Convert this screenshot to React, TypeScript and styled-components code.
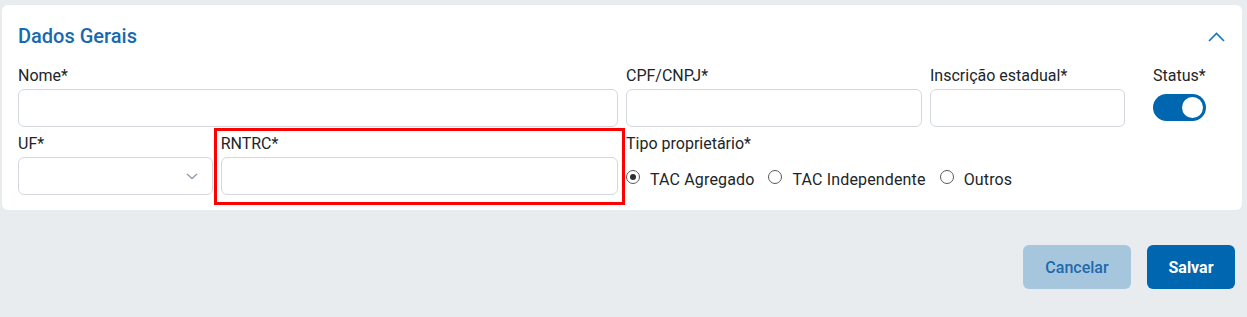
import React from "react"
import styled, { createGlobalStyle } from "styled-components"

const GlobalStyle = createGlobalStyle`
    * { box-sizing: border-box; }
    body {
        margin: 0;
        background: #e9ecee;
        font-family: Roboto, "Liberation Sans", Arial, sans-serif;
        color: #212529;
    }
`

const Page = styled.div`
    padding: 5px 5px 0 2px;
`

const Card = styled.section`
    background: #ffffff;
    border-radius: 6px;
    padding: 21px 16px 15px 16px;
`

const CardHeader = styled.div`
    display: flex;
    align-items: center;
    justify-content: space-between;
    height: 21px;
`

const Title = styled.h2`
    margin: 0;
    font-size: 20px;
    line-height: 21px;
    font-weight: 500;
    color: #1769b0;
`

const CollapseButton = styled.button`
    border: 0;
    background: transparent;
    padding: 0;
    margin-right: 1px;
    display: flex;
    cursor: pointer;
`

const FormGrid = styled.div`
    display: grid;
    grid-template-columns: repeat(12, 1fr);
    column-gap: 8px;
    row-gap: 7px;
    margin-top: 19px;
`

type FieldType = {
    $span: number
    $center?: boolean
    $highlight?: boolean
}

const Field = styled.div<FieldType>`
    grid-column: span ${props => props.$span};
    display: flex;
    flex-direction: column;
    gap: 4px;
    align-items: ${props => props.$center ? 'center' : 'stretch'};
    position: relative;
    ${props => props.$highlight && `
        &::after {
            content: "";
            position: absolute;
            top: -6px;
            left: -7px;
            right: -7px;
            bottom: -10px;
            border: 3px solid #ff0000;
            pointer-events: none;
        }
    `}
`

const Label = styled.label`
    font-size: 16px;
    line-height: 19px;
    font-weight: 400;
    color: #212529;
    white-space: nowrap;
`

const Input = styled.input`
    height: 38px;
    width: 100%;
    border: 1px solid #d4d8dd;
    border-radius: 6px;
    background: #fff;
    font: inherit;
    padding: 0 12px;
    outline: none;
`

const SelectBox = styled.div`
    height: 38px;
    border: 1px solid #d4d8dd;
    border-radius: 6px;
    display: flex;
    align-items: center;
    justify-content: flex-end;
    padding-right: 14px;
`

const Toggle = styled.div<{ $on: boolean }>`
    width: 53px;
    height: 27px;
    margin-top: 5px;
    border-radius: 14px;
    background: ${props => props.$on ? '#0066b0' : '#c9ced4'};
    display: flex;
    align-items: center;
    justify-content: ${props => props.$on ? 'flex-end' : 'flex-start'};
    padding: 0 3px;
`

const Knob = styled.span`
    width: 21px;
    height: 21px;
    border-radius: 50%;
    background: #ffffff;
`

const RadioGroup = styled.div`
    height: 38px;
    display: flex;
    align-items: flex-start;
    gap: 14px;
    padding-top: 13px;
`

const RadioOption = styled.label`
    display: flex;
    align-items: flex-start;
    font-size: 16px;
    line-height: 19px;
    letter-spacing: 0.15px;
    color: #212529;
    white-space: nowrap;
`

const RadioCircle = styled.span<{ $checked?: boolean }>`
    width: 14px;
    height: 14px;
    margin: 0 10px 0 0;
    border-radius: 50%;
    border: 1.5px solid #555a60;
    display: flex;
    align-items: center;
    justify-content: center;
    &::before {
        content: "";
        width: 6px;
        height: 6px;
        border-radius: 50%;
        background: ${props => props.$checked ? '#2b2f33' : 'transparent'};
    }
`

const Actions = styled.div`
    display: flex;
    justify-content: flex-end;
    gap: 16px;
    margin-top: 35px;
    padding-right: 7px;
`

const Button = styled.button<{ $variant: 'primary' | 'secondary' }>`
    height: 44px;
    border: 0;
    border-radius: 6px;
    padding: 0;
    width: ${props => props.$variant === 'primary' ? '88px' : '108px'};
    background: ${props => props.$variant === 'primary' ? '#0066b0' : '#a6c6de'};
    color: ${props => props.$variant === 'primary' ? '#ffffff' : '#1f69ad'};
    font-family: Roboto, "Liberation Sans", Arial, sans-serif;
    font-size: 16px;
    font-weight: ${props => props.$variant === 'primary' ? 700 : 500};
    cursor: pointer;
`

const tipos = ['TAC Agregado', 'TAC Independente', 'Outros']

export default function App() {
    return (
        <Page>
            <GlobalStyle />
            <Card>
                <CardHeader>
                    <Title>Dados Gerais</Title>
                    <CollapseButton aria-label="Recolher">
                        <svg width="17" height="10" viewBox="0 0 17 10" fill="none">
                            <polyline points="1,9 8.5,1.5 16,9" stroke="#1a73c0" strokeWidth="1.6" />
                        </svg>
                    </CollapseButton>
                </CardHeader>
                <FormGrid>
                    <Field $span={6}>
                        <Label>Nome*</Label>
                        <Input />
                    </Field>
                    <Field $span={3}>
                        <Label>CPF/CNPJ*</Label>
                        <Input />
                    </Field>
                    <Field $span={2}>
                        <Label>Inscrição estadual*</Label>
                        <Input />
                    </Field>
                    <Field $span={1} $center>
                        <Label>Status*</Label>
                        <Toggle $on>
                            <Knob />
                        </Toggle>
                    </Field>
                    <Field $span={2}>
                        <Label>UF*</Label>
                        <SelectBox>
                            <svg width="12" height="7" viewBox="0 0 12 7" fill="none">
                                <polyline points="1,1 6,5.5 11,1" stroke="#8f9db2" strokeWidth="1.4" />
                            </svg>
                        </SelectBox>
                    </Field>
                    <Field $span={4} $highlight>
                        <Label>RNTRC*</Label>
                        <Input />
                    </Field>
                    <Field $span={6}>
                        <Label>Tipo proprietário*</Label>
                        <RadioGroup>
                            {tipos.map((t, i) => (
                                <RadioOption key={t}>
                                    <RadioCircle $checked={i === 0} />
                                    {t}
                                </RadioOption>
                            ))}
                        </RadioGroup>
                    </Field>
                </FormGrid>
            </Card>
            <Actions>
                <Button $variant="secondary">Cancelar</Button>
                <Button $variant="primary">Salvar</Button>
            </Actions>
        </Page>
    )
}
